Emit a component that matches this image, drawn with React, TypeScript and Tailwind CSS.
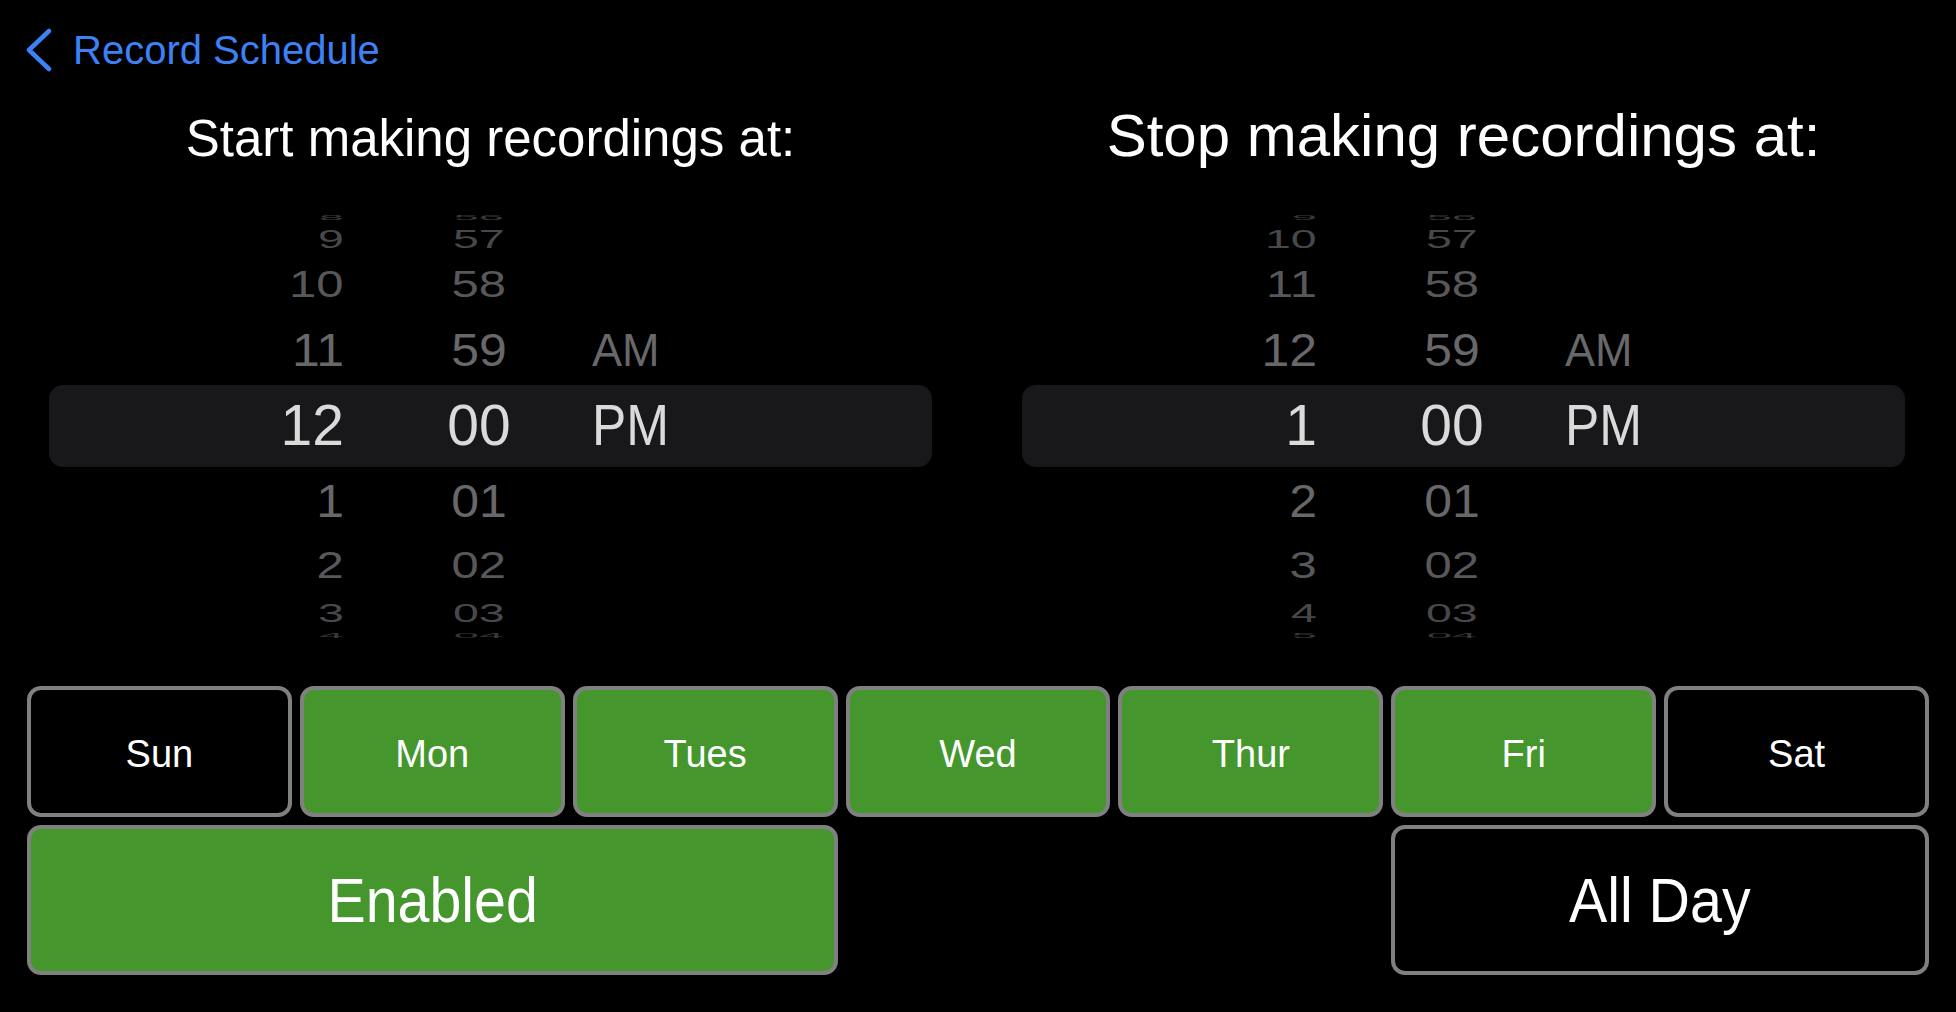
import React from 'react';

type Slot = { h: number; sx: number; sy: number; color: string };

// rows above the selection band, nearest last; mirrored below
const SLOTS: Slot[] = [
  { h: 12, sx: 0.9, sy: 0.16, color: '#38383a' },
  { h: 32, sx: 0.93, sy: 0.5, color: '#48484a' },
  { h: 61, sx: 0.98, sy: 0.73, color: '#58585a' },
  { h: 69, sx: 1, sy: 0.92, color: '#68686a' },
];

const MINUTES = ['56', '57', '58', '59', '00', '01', '02', '03', '04'];

const DAYS = [
  { label: 'Sun', on: false },
  { label: 'Mon', on: true },
  { label: 'Tues', on: true },
  { label: 'Wed', on: true },
  { label: 'Thur', on: true },
  { label: 'Fri', on: true },
  { label: 'Sat', on: false },
];

function Cells({
  hour,
  minute,
  ampm,
  sx,
  sy,
  color,
}: {
  hour: string;
  minute: string;
  ampm?: string;
  sx: number;
  sy: number;
  color: string;
}) {
  return (
    <>
      <div className="w-[295px] text-right">
        <span
          className="inline-block origin-right leading-none"
          style={{ transform: `scale(${sx}, ${sy})`, color }}
        >
          {hour}
        </span>
      </div>
      <div className="ml-[75px] w-[120px] text-center">
        <span
          className="inline-block origin-center leading-none"
          style={{ transform: `scale(${sx}, ${sy})`, color }}
        >
          {minute}
        </span>
      </div>
      {ampm && (
        <div className="ml-[53px] text-left">
          <span
            className="inline-block origin-left leading-none"
            style={{ transform: `scale(${sx * 0.9}, ${sy})`, color }}
          >
            {ampm}
          </span>
        </div>
      )}
    </>
  );
}

function TimePicker({ hours, ampm }: { hours: string[]; ampm: string }) {
  const above = SLOTS;
  const below = [...SLOTS].reverse();

  return (
    <div className="flex flex-col">
      {above.map((s, i) => (
        <div key={'a' + i} className="flex items-center text-[50px]" style={{ height: s.h }}>
          <Cells
            hour={hours[i]}
            minute={MINUTES[i]}
            ampm={i === 3 ? 'AM' : undefined}
            sx={s.sx}
            sy={s.sy}
            color={s.color}
          />
        </div>
      ))}

      {/* selection band */}
      <div className="flex h-[82px] items-center rounded-[14px] bg-[#18181a] text-[57px]">
        <Cells hour={hours[4]} minute={MINUTES[4]} ampm={ampm} sx={1} sy={1} color="#dadada" />
      </div>

      {below.map((s, i) => (
        <div key={'b' + i} className="flex items-center text-[50px]" style={{ height: s.h }}>
          <Cells hour={hours[5 + i]} minute={MINUTES[5 + i]} sx={s.sx} sy={s.sy} color={s.color} />
        </div>
      ))}
    </div>
  );
}

function DayButton({ label, on }: { label: string; on: boolean }) {
  return (
    <button
      className={
        on
          ? 'flex h-[131px] items-center justify-center rounded-[14px] border-4 border-[#808080] bg-[#44962d] pt-[5px] text-[38px] text-white'
          : 'flex h-[131px] items-center justify-center rounded-[14px] border-4 border-[#808080] bg-black pt-[5px] text-[38px] text-white'
      }
    >
      {label}
    </button>
  );
}

export default function App() {
  return (
    <div className="h-[1012px] w-[1956px] overflow-hidden bg-black font-['Liberation_Sans',Arial,sans-serif] text-white">
      {/* Nav back */}
      <div className="mt-[28px] flex h-[44px] items-center gap-[21px] pl-[26px]">
        <svg width="26" height="44" viewBox="0 0 26 44" fill="none">
          <path
            d="M23 3 L3 22 L23 41"
            stroke="#3c82f6"
            strokeWidth="4.5"
            strokeLinecap="round"
            strokeLinejoin="round"
          />
        </svg>
        <span className="text-[40px] leading-[40px] text-[#3c82f6]">Record Schedule</span>
      </div>

      {/* Titles */}
      <div className="mt-[34px] grid grid-cols-2 items-baseline gap-[90px] pl-[49px] pr-[51px] text-center">
        <div className="text-[51px] leading-none">Start making recordings at:</div>
        <div className="text-[60px] leading-none">Stop making recordings at:</div>
      </div>

      {/* Pickers */}
      <div className="mt-[45px] grid grid-cols-2 gap-[90px] pl-[49px] pr-[51px]">
        <TimePicker hours={['8', '9', '10', '11', '12', '1', '2', '3', '4']} ampm="PM" />
        <TimePicker hours={['9', '10', '11', '12', '1', '2', '3', '4', '5']} ampm="PM" />
      </div>

      {/* Days + toggles */}
      <div className="mt-[45px] grid grid-cols-7 gap-2 px-[27px]">
        {DAYS.map((d) => (
          <DayButton key={d.label} label={d.label} on={d.on} />
        ))}
        <button className="col-span-3 flex h-[150px] items-center justify-center rounded-[14px] border-4 border-[#808080] bg-[#44962d] text-[63px] text-white">
          <span className="inline-block scale-x-[0.91]">Enabled</span>
        </button>
        <button className="col-span-2 col-start-6 flex h-[150px] items-center justify-center rounded-[14px] border-4 border-[#808080] bg-black text-[63px] text-white">
          <span className="inline-block scale-x-[0.91]">All Day</span>
        </button>
      </div>
    </div>
  );
}
